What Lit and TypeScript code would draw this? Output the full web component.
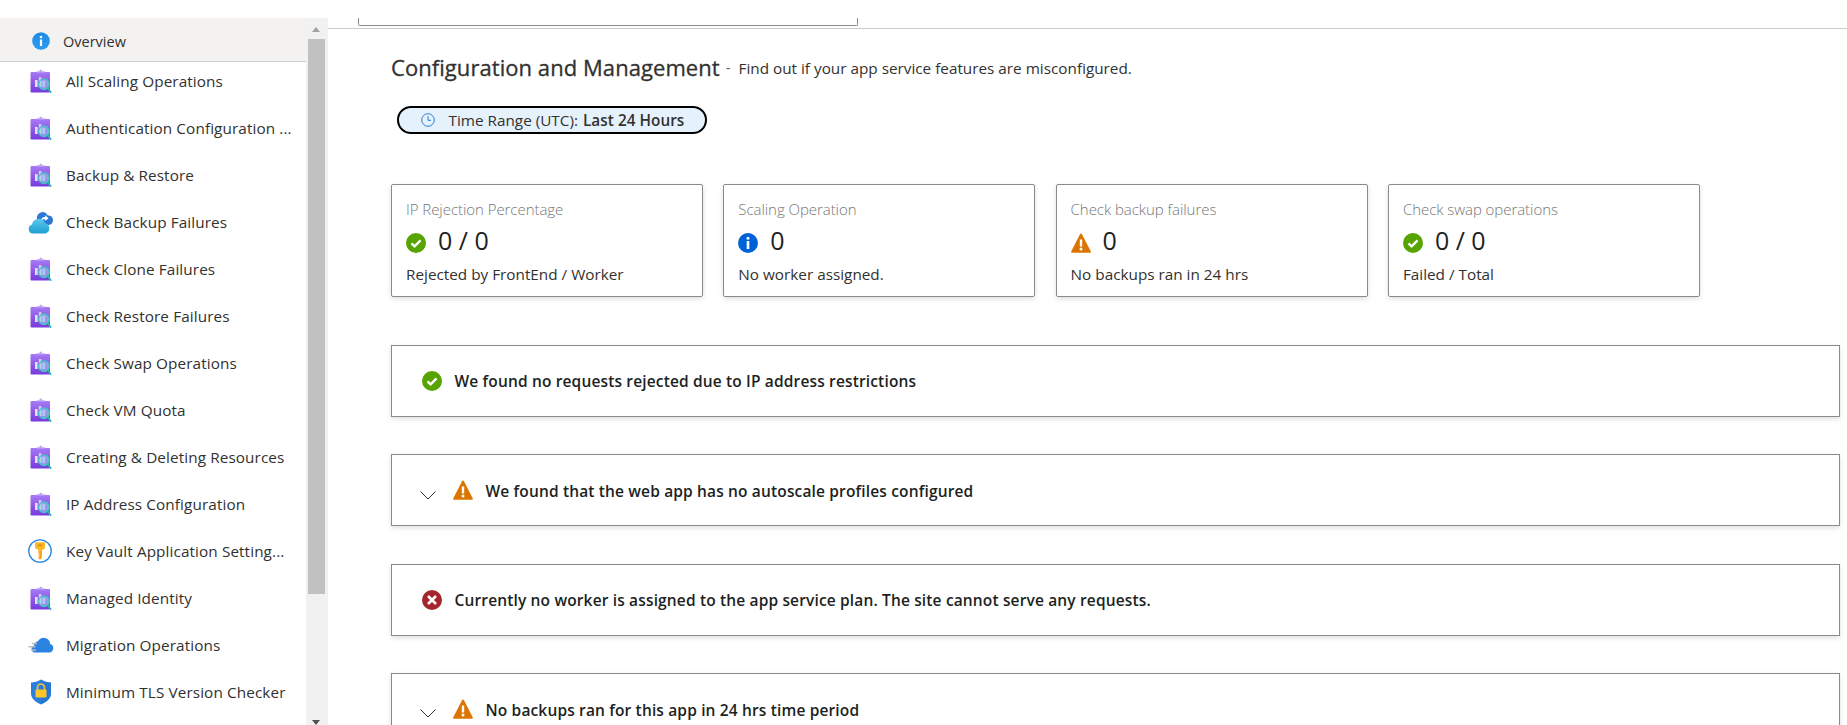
import { LitElement, html, css, svg } from "lit";
import { customElement } from "lit/decorators.js";

const clip = html`<svg class="ni shift" viewBox="0 0 22 25" width="22" height="25">
  <defs><linearGradient id="pg" x1="0" y1="0" x2="0" y2="1"><stop offset="0" stop-color="#a67af4"/><stop offset="1" stop-color="#773adc"/></linearGradient></defs>
  <rect x="0.5" y="3" width="19.5" height="20.5" rx="1" fill="url(#pg)"/>
  <path d="M6.5 3.5V2.200h3V0.800h2.500v1.400h3v1.300z" fill="#c3a5f3"/>
  <rect x="5" y="11" width="2.600" height="7" fill="#e6dcfb"/>
  <rect x="8.800" y="8" width="2.600" height="10" fill="#d8c8f8"/>
  <rect x="12.400" y="12" width="2.600" height="6" fill="#c6b0f5"/>
  <circle cx="14" cy="15.200" r="5.300" fill="#9fd7ee" fill-opacity=".55" stroke="#3cc7c0" stroke-width="1.300"/>
  <path d="M17.600 19l3.600 4.800" stroke="#2ab9a5" stroke-width="1.600" fill="none"/>
</svg>`;

const backup = html`<svg class="ni" viewBox="0 0 26 23" width="26" height="23">
  <defs><linearGradient id="cg1" x1="0" y1="0" x2="0" y2="1"><stop offset="0" stop-color="#5ec8ee"/><stop offset="1" stop-color="#1e9fd2"/></linearGradient></defs>
  <path d="M9 8.500a6 6 0 0 1 5.500-7.500 6 6 0 0 1 5.200 3.500 4.600 4.600 0 0 1 5.300 4.600 4.500 4.500 0 0 1-4.400 4.900H11z" fill="#2b78d6"/>
  <path d="M13 9.600c0-2.400 1.800-3.600 4.200-3.500V4.300l3.400 2.900-3.400 2.900V8.200c-1.600 0-2.800.4-4.200 1.400z" fill="#fff"/>
  <path d="M5 22.500a4.600 4.600 0 0 1-1-9 6.800 6.800 0 0 1 13-1.400 5.400 5.400 0 0 1 .6 10.400z" fill="url(#cg1)"/>
</svg>`;

const key = html`<svg class="ni" viewBox="0 0 24 24" width="24" height="24">
  <circle cx="12" cy="12" r="11.200" fill="#fff" stroke="#2a86dc" stroke-width="1.300"/>
  <path d="M7 3.200h10v6l-3.300 2.400v6.900L12 21l-1.800-1.800v-1.500l1-.8-1-.9.9-.9-.9-.9v-3.500L7 9.200z" fill="#fdb827"/>
  <path d="M9.800 6.300h4.400" stroke="#d88a0c" stroke-width="1.500"/>
  <path d="M12.300 11.600V20.600l1.400-2.100v-6.900z" fill="#ee9c12"/>
</svg>`;

const migrate = html`<svg class="ni" viewBox="0 0 26 16" width="26" height="16">
  <path d="M7 15.500H21a4.400 4.400 0 0 0 1.200-8.600A6.500 6.500 0 0 0 15.800.8 6.500 6.500 0 0 0 10 4.300a5 5 0 0 0-4 4.400 3.500 3.500 0 0 0 1 6.800z" fill="#2b82e0"/>
  <path d="M4 6.500h5M0.500 9.800h7M3 13h5" stroke="#b8bcc0" stroke-width="1.500"/>
</svg>`;

const shield = html`<svg class="ni shift" viewBox="0 0 22 26" width="22" height="26">
  <path d="M11 .5C8 2.600 4.500 3.500 1 3.600v11c0 5 4.500 8.500 10 10.900 5.500-2.400 10-5.900 10-10.900v-11C17.500 3.500 14 2.600 11 .5z" fill="#2a7fdc"/>
  <path d="M11 .5C14 2.600 17.500 3.500 21 3.600v11c0 5-4.500 8.500-10 10.900z" fill="#1e6fc8" fill-opacity=".5"/>
  <path d="M7.500 11V8.500a3.500 3.500 0 0 1 7 0V11" stroke="#f5c33b" stroke-width="1.700" fill="none"/>
  <rect x="5.500" y="10.500" width="11" height="8" rx=".8" fill="#fcc629"/>
</svg>`;

const infoNav = html`<svg class="ni" viewBox="0 0 18 18" width="18" height="18">
  <defs><linearGradient id="ig" x1="0" y1="0" x2="0" y2="1"><stop offset="0" stop-color="#1f8ae8"/><stop offset="1" stop-color="#2b9df0"/></linearGradient></defs>
  <circle cx="9" cy="9" r="8.800" fill="url(#ig)"/>
  <circle cx="9" cy="5" r="1.300" fill="#fff"/>
  <rect x="7.900" y="7.500" width="2.200" height="6.500" fill="#fff"/>
</svg>`;

const check = svg`<circle cx="10" cy="10" r="10" fill="#57a300"/><path d="M5.500 10.300l3.100 3 5.900-6" stroke="#fff" stroke-width="2.400" fill="none"/>`;
const info = svg`<circle cx="10" cy="10" r="10" fill="#0062d9"/><circle cx="10" cy="5.300" r="1.500" fill="#fff"/><rect x="8.700" y="8" width="2.600" height="8" fill="#fff"/>`;
const warn = svg`<path d="M10 .5c.5 0 .8.300 1 .700l8.800 17.300c.3.700-.1 1.300-.8 1.300H1c-.7 0-1.100-.6-.8-1.300L9 1.200c.2-.4.500-.7 1-.7z" fill="#db7500"/><rect x="8.800" y="6.500" width="2.400" height="7" fill="#fff"/><circle cx="10" cy="16" r="1.500" fill="#fff"/>`;
const err = svg`<circle cx="10" cy="10" r="10" fill="#a4262c"/><path d="M6 6l8 8M14 6l-8 8" stroke="#fff" stroke-width="2.500" fill="none"/>`;
const st = (c: unknown) => html`<svg class="st" viewBox="0 0 20 20" width="20" height="20">${c}</svg>`;

const NAV: [string, unknown][] = [
  ["All Scaling Operations", clip],
  ["Authentication Configuration ...", clip],
  ["Backup & Restore", clip],
  ["Check Backup Failures", backup],
  ["Check Clone Failures", clip],
  ["Check Restore Failures", clip],
  ["Check Swap Operations", clip],
  ["Check VM Quota", clip],
  ["Creating & Deleting Resources", clip],
  ["IP Address Configuration", clip],
  ["Key Vault Application Setting...", key],
  ["Managed Identity", clip],
  ["Migration Operations", migrate],
  ["Minimum TLS Version Checker", shield],
];

const CARDS: [string, unknown, string, string][] = [
  ["IP Rejection Percentage", check, "0 / 0", "Rejected by FrontEnd / Worker"],
  ["Scaling Operation", info, "0", "No worker assigned."],
  ["Check backup failures", warn, "0", "No backups ran in 24 hrs"],
  ["Check swap operations", check, "0 / 0", "Failed / Total"],
];

const ROWS: [boolean, unknown, string][] = [
  [false, check, "We found no requests rejected due to IP address restrictions"],
  [true, warn, "We found that the web app has no autoscale profiles configured"],
  [false, err, "Currently no worker is assigned to the app service plan. The site cannot serve any requests."],
  [true, warn, "No backups ran for this app in 24 hrs time period"],
];

@customElement("app-root")
export class AppRoot extends LitElement {
  static styles = css`
    :host {
      display: block;
      width: 1847px;
      height: 725px;
      overflow: hidden;
      background: #fff;
      font-family: "Open Sans", "Noto Sans", sans-serif;
      color: #323130;
    }
    .page { display: flex; height: 725px; }
    .sidebar { width: 328px; flex: none; margin-top: 18px; display: flex; height: 707px; overflow: hidden; }
    .nav { width: 306px; flex: none; }
    .sel {
      height: 44px; box-sizing: border-box; display: flex; align-items: center;
      background: #f3f2f1; border-bottom: 1px solid #ccc;
      padding: 4px 0 0 32px; gap: 13px; font-size: 14.500px; font-weight: 500;
      color: #323130;
    }
    .sel .ni { margin-top: -2px; }
    .item {
      height: 47px; box-sizing: border-box; padding-bottom: 8.500px; display: flex; align-items: center;
      font-size: 15.300px; letter-spacing: 0.1px; white-space: nowrap; color: #323130;
    }
    .ic { width: 66px; flex: none; padding-left: 28px; box-sizing: border-box; display: flex; }
    .ic .ni { display: block; }
    .ic .shift { margin-left: 2px; }
    .track { width: 22px; flex: none; background: #f1f1f1; display: flex; flex-direction: column; align-items: center; position: relative; }
    .thumb { width: 17px; height: 555px; margin-top: 21px; background: #c1c1c1; margin-left: -1px; }
    .up, .down { position: absolute; left: 6px; width: 0; height: 0; border-left: 4.500px solid transparent; border-right: 4.500px solid transparent; }
    .up { top: 9px; border-bottom: 5px solid #a3a3a3; }
    .down { bottom: 0; border-top: 5px solid #505050; }

    .main { flex: 1; padding-top: 18px; min-width: 0; }
    .stub { margin-left: 30px; width: 500px; height: 8px; box-sizing: border-box; border: 1px solid #8a8a8a; border-top: none; border-radius: 0 0 2px 2px; }
    .rule { height: 1px; background: #ccc; margin-top: 2px; }
    .content { padding: 0 7px 0 63px; }
    .head { display: flex; align-items: center; margin-top: 23px; height: 30px; white-space: nowrap; }
    h1 { margin: 0; font-size: 22px; font-weight: 500; letter-spacing: 0.06px; color: #323130; line-height: 30px; -webkit-text-stroke: 0.3px #323130; }
    .dash { font-size: 15px; margin-left: 6px; color: #605e5c; }
    .sub { font-size: 15.300px; margin-left: 8px; letter-spacing: 0; color: #323130; margin-top: 1px; }
    .pill {
      margin: 24px 0 0 5.500px; width: 310px; height: 28px; box-sizing: border-box;
      border: 2px solid #000; border-radius: 14px; background: #e5f1fb;
      display: flex; align-items: center; padding-left: 22px; font-size: 15.300px; white-space: nowrap;
    }
    .pill svg { margin-right: 14px; flex: none; }
    .pill b { font-weight: 600; margin-left: 5px; letter-spacing: 0.05px; }
    .cards { display: flex; gap: 20.300px; margin-top: 50px; }
    .card {
      width: 312px; height: 113px; box-sizing: border-box; flex: none;
      border: 1px solid #8a8a8a; border-radius: 2px; padding: 14px 14px 0;
      box-shadow: 0 2px 5px rgba(0,0,0,.13);
    }
    .ct { font-size: 15px; line-height: 20px; color: #767676; letter-spacing: -0.05px; font-weight: 300; white-space: nowrap; }
    .cv { display: flex; align-items: center; height: 36px; margin-top: 3px; }
    .cv .st { margin-top: 5px; flex: none; }
    .cv span { font-size: 25px; margin-left: 12px; color: #201f1e; margin-top: -1px; }
    .cd { font-size: 15.300px; line-height: 20px; margin-top: 6px; color: #323130; white-space: nowrap; }
    .rows { margin-top: 48px; display: flex; flex-direction: column; gap: 37.330px; }
    .row {
      height: 72px; box-sizing: border-box; flex: none;
      border: 1px solid #8a8a8a; box-shadow: 0 2px 5px rgba(0,0,0,.13);
      display: flex; align-items: center; padding-left: 30px;
      font-size: 15.500px; font-weight: 600; letter-spacing: 0.15px; color: #201f1e; white-space: nowrap;
    }
    .row .st { margin-right: 12.500px; flex: none; }
    .chev { flex: none; width: 16px; height: 9px; margin-left: -2px; margin-right: 17px; margin-top: 10px; display: block; }
    .chev ~ span { margin-top: 2px; }
  `;

  render() {
    return html`<div class="page">
      <div class="sidebar">
        <div class="nav">
          <div class="sel">${infoNav}<span>Overview</span></div>
          ${NAV.map(([t, i]) => html`<div class="item"><span class="ic">${i}</span><span>${t}</span></div>`)}
        </div>
        <div class="track"><span class="up"></span><div class="thumb"></div><span class="down"></span></div>
      </div>
      <div class="main">
        <div class="stub"></div>
        <div class="rule"></div>
        <div class="content">
          <div class="head">
            <h1>Configuration and Management</h1>
            <span class="dash">-</span>
            <span class="sub">Find out if your app service features are misconfigured.</span>
          </div>
          <div class="pill">
            <svg viewBox="0 0 14 14" width="14" height="14"><circle cx="7" cy="7" r="6.300" fill="none" stroke="#2b7cd3" stroke-width="1"/><path d="M7 3.200V7.300h3" fill="none" stroke="#2b7cd3" stroke-width="1"/></svg>
            <span>Time Range (UTC):</span><b>Last 24 Hours</b>
          </div>
          <div class="cards">
            ${CARDS.map(([t, i, v, d]) => html`<div class="card">
              <div class="ct">${t}</div>
              <div class="cv">${st(i)}<span>${v}</span></div>
              <div class="cd">${d}</div>
            </div>`)}
          </div>
          <div class="rows">
            ${ROWS.map(([c, i, t]) => html`<div class="row">
              ${c ? html`<svg class="chev" viewBox="0 0 16 9"><path d="M.5.5L8 8l7.500-7.500" fill="none" stroke="#323130" stroke-width="1"/></svg>` : ""}
              ${st(i)}<span>${t}</span>
            </div>`)}
          </div>
        </div>
      </div>
    </div>`;
  }
}
